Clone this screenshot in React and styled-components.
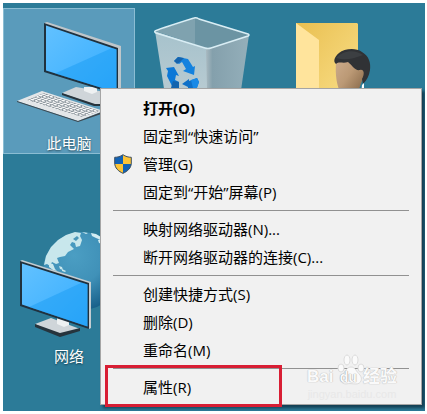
import React from 'react';
import styled, { createGlobalStyle } from 'styled-components';

const GlobalStyle = createGlobalStyle`
  * {
    box-sizing: border-box;
  }
  body {
    margin: 0;
    background-color: #fff;
    font-family: 'Open Sans', 'Noto Sans CJK SC', sans-serif;
  }
`;

const Desktop = styled.main`
  position: relative;
  margin: 3px 2px 3px 3px;
  padding-top: 5px;
  min-height: calc(100vh - 6px);
  background-color: #2c7b98;
  overflow: hidden;
`;

const IconGrid = styled.div`
  display: grid;
  grid-template-columns: repeat(3, 132px);
  column-gap: 2px;
  row-gap: 67px;
`;

const DesktopIcon = styled.button`
  display: flex;
  flex-direction: column;
  align-items: center;
  height: 146px;
  padding: 0;
  border: none;
  background-color: ${({ $selected }) => ($selected ? '#5a9bbb' : 'transparent')};
  box-shadow: ${({ $selected }) => ($selected ? 'inset 0 0 0 1px #8bbdd3' : 'none')};
  color: #fff;
  font-family: inherit;
  font-size: 15px;
  line-height: 22px;
  text-shadow: 0 1px 2px rgba(0, 0, 0, 0.5);
`;

const Art = styled.svg`
  flex: none;
  width: 132px;
  height: 124px;
  overflow: visible;
`;

const Menu = styled.div`
  position: absolute;
  top: 85px;
  left: 97px;
  right: 3px;
  padding: 5px 2px 3px;
  border: 1px solid #a5a5a5;
  background-color: #f1f1f1;
  box-shadow: 3px 3px 3px rgba(0, 20, 35, 0.6);
`;

const MenuItem = styled.button`
  display: grid;
  grid-template-columns: 40px 1fr;
  align-items: center;
  width: 100%;
  height: 28px;
  padding: 0;
  border: none;
  background: none;
  color: #000;
  font-family: inherit;
  font-size: 15px;
  font-weight: ${({ $bold }) => ($bold ? 700 : 400)};
  line-height: 28px;
  text-align: left;
`;

const ItemIcon = styled.span`
  display: flex;
  padding-left: 11px;
`;

const Separator = styled.hr`
  height: 1px;
  margin: 4px 10px;
  border: none;
  background-color: #919191;
`;

const Mark = styled.div`
  position: absolute;
  left: 4px;
  bottom: -3px;
  width: 177px;
  height: 42px;
  border: 3px solid #d81e34;
  pointer-events: none;
`;

const Watermark = styled.div`
  position: absolute;
  right: 24px;
  bottom: 3px;
  width: 90px;
  color: #fafafa;
  font-family: 'Liberation Sans', 'Noto Sans CJK SC', sans-serif;
  text-align: center;
  pointer-events: none;
`;

const WatermarkName = styled.div`
  display: flex;
  justify-content: space-between;
  align-items: center;
  font-size: 17px;
  font-weight: 700;
  line-height: 20px;
  text-shadow: 0 0 1px #bbb, 0 0 1px #bbb;
`;

const WatermarkSite = styled.div`
  color: #e8e8e8;
  font-size: 11px;
  line-height: 14px;
`;

const Paw = styled.svg`
  position: absolute;
  left: 30px;
  top: -13px;
`;

const Du = styled.span`
  position: relative;
  font-size: 14px;
  text-shadow: 0 0 1px #999, 0 0 1px #999;
`;

const ComputerArt = () => (
  <Art viewBox="3 8 132 124" aria-hidden="true">
    <defs>
      <linearGradient id="screen" x1="0" y1="0" x2="1" y2="1">
        <stop offset="0" stopColor="#62c1ff" />
        <stop offset="1" stopColor="#35adff" />
      </linearGradient>
      <pattern id="keys" width="4" height="3" patternUnits="userSpaceOnUse" patternTransform="matrix(1 .32 -.9 .45 0 0)">
        <rect width="4" height="3" fill="#8d979e" />
        <rect width="3" height="2" fill="#fafafa" />
      </pattern>
    </defs>
    <path d="M62 93 76 87 105 92v13l-10 0z" fill="#cfd5d9" />
    <path d="m62 93 33 11h10v2H94L62 95z" fill="#27333b" />
    <path d="M84 87h13v5l-5 2-8-3z" fill="#eef1f2" />
    <path d="m44 23 3-1 74 24v50l-3 1z" fill="#bfc6ca" />
    <path d="m44 23 74 25v47L44 72z" fill="#20313e" />
    <path d="m46 25.500 70.500 24v43L46 70.500z" fill="url(#screen)" />
    <path d="m112 48 4.500 1.500v43L55 73.500z" fill="#1398f2" opacity=".45" />
    <path d="m17 101 25-10 62 20-26 10z" fill="#e3e6e8" />
    <path d="m27 100 17-7 56 18-18 6z" fill="url(#keys)" />
    <path d="m17 101 61 20 26-10v2l-26 9-61-20z" fill="#3c464d" />
  </Art>
);

const BinArt = () => (
  <Art viewBox="137 8 132 124" aria-hidden="true">
    <defs>
      <linearGradient id="binLeft" x1="0" y1="0" x2="0" y2="1">
        <stop offset="0" stopColor="#a6c2cc" />
        <stop offset="1" stopColor="#c3d0d5" />
      </linearGradient>
      <linearGradient id="binRight" x1="0" y1="0" x2="1" y2="0">
        <stop offset="0" stopColor="#a9b9c0" />
        <stop offset="0.15" stopColor="#84a0ac" />
        <stop offset="1" stopColor="#94afba" />
      </linearGradient>
    </defs>
    <path d="m155 31 53 18v80l-40-15z" fill="url(#binLeft)" />
    <path d="m206 49 43-14-11 76-30 18z" fill="url(#binRight)" />
    <path d="m155 31 40-13 54 17-41 14z" fill="#7fa2af" />
    <path d="m195 18 54 17-41 14-13-4z" fill="#6b94a3" />
    <path d="M155 31Q156 30 194 18q2-1 5 1l49 15q2 1 0 2l-37 12q-3 1-6 0l-49-15q-2-1-1-2z" fill="none" stroke="#d9edf4" strokeWidth="1.500" />
    <path d="m174 61 4-4 10 2 5 8 2-1-1 9-11-4 3-2-4-7-3 2z" fill="#1482de" />
    <path d="m174 61 4-4 6 1-4 4-3 2z" fill="#1464ae" />
    <path d="m166 68 8-1 5 9-3-1-1 5 4 2v6h-6l-6-12 1-5z" fill="#0c78d7" />
    <path d="m173 81 6 1v6h-8z" fill="#1464ae" />
    <path d="m182 84 7-5v2l8-3 2 4-3 8h-8v-3z" fill="#0f70c8" />
    <path d="m191 80 6-2 2 4-2 6h-4z" fill="#1989e6" />
  </Art>
);

const UserFolderArt = () => (
  <Art viewBox="271 8 132 124" aria-hidden="true">
    <defs>
      <linearGradient id="folderBack" x1="0" y1="0" x2="1" y2="1">
        <stop offset="0" stopColor="#e9bf50" />
        <stop offset="1" stopColor="#fae08a" />
      </linearGradient>
      <linearGradient id="face" x1="0" y1="0" x2="1" y2="1">
        <stop offset="0" stopColor="#cfae8e" />
        <stop offset="0.45" stopColor="#bb9975" />
        <stop offset="1" stopColor="#795b3d" />
      </linearGradient>
    </defs>
    <path d="M296 23h61l1 1v80h-62z" fill="url(#folderBack)" />
    <path d="m296 23 23 17v70l-23-17z" fill="#ffe49c" />
    <path d="M336 63c-1 12 1 22 4 29 4 8 14 8 19-3l3-8c4-4 4-10 1-14L350 56z" fill="url(#face)" />
    <path d="M336 64c-3-2-2-7 3-11 5-4 16-6 23-1 7 4 9 11 8 18-1 6-3 10-7 14l-1-5c3-5 2-10-2-9-5 1-7-4-12-8-5 2-9-1-12 2z" fill="#303235" />
    <path d="M336 58c7-8 19-9 27-3-8 3-17 6-27 3z" fill="#44474b" opacity=".6" />
    <path d="m362 85 2-2v12h-3z" fill="#fff" />
  </Art>
);

const NetworkArt = () => (
  <Art viewBox="3 221 132 124" aria-hidden="true">
    <defs>
      <radialGradient id="globe" cx="0.4" cy="0.3" r="0.75">
        <stop offset="0" stopColor="#4b9ec3" />
        <stop offset="0.5" stopColor="#4091b8" />
        <stop offset="1" stopColor="#155c86" />
      </radialGradient>
    </defs>
    <circle cx="82" cy="271" r="39" fill="url(#globe)" />
    <path d="m44 265 2-9 5-9 7-7 8-5 9-3 6 1-1 3 2 4-2 6-4 1-1-4-3-1-2 3 4 4-6 3-3 4-5 1-3 1 2 5-3 1-4-2-2 4-3-2z" fill="#c8e7ec" />
    <path d="m49 263 4 1 2 5 2 2-4-1-4-3zM59 266l3 1 1 3-3-1zM62 269l4 2-1 1-3-1z" fill="#c8e7ec" />
    <path d="m73 239 4-3 2 2-3 3z" fill="#4a97b8" />
    <path d="m91 233 5 1 5 3v3l-5-2-4-2zM98 240l4-1v5l-3-1zM82 232l6 1-2 1z" fill="#d3edf2" />
    <path d="m35 324 16-6 29 11-20 7z" fill="#cfd5d9" />
    <path d="m35 324 25 9 20-5v3l-20 6-25-10z" fill="#26343d" />
    <path d="M57 318h12v7l-5 2-7-3z" fill="#eef1f2" />
    <path d="m20 261 2-1 69 22v46l-2 1z" fill="#c3ccd1" />
    <path d="m20 261 69 22v46l-69-23z" fill="#20313e" />
    <path d="m22 263.500 65.500 21v42L22 304.500z" fill="url(#screen)" />
    <path d="m82 282.500 5.500 2v42L29 307z" fill="#1398f2" opacity=".45" />
  </Art>
);

const ShieldIcon = () => (
  <svg width="18" height="20" viewBox="0 0 18 20" aria-hidden="true">
    <path d="M9 0.700C6.500 2.500 3.500 3.300 0.700 3.300V9c0 5 4 8.500 8.300 10.300z" fill="#1262b5" />
    <path d="M9 0.700c2.500 1.800 5.500 2.600 8.300 2.600V9c0 5-4 8.500-8.300 10.300z" fill="#fdc436" />
    <path d="M0.700 10H9v9.300C5 17.500 1 14.500 0.700 10z" fill="#fdc436" />
    <path d="M9 10h8.300c-.3 4.500-4.300 7.500-8.300 9.300z" fill="#1262b5" />
    <path d="M9 0.700C6.500 2.500 3.500 3.300 0.700 3.300V9c0 5 4 8.500 8.300 10.300C13.300 17.500 17.300 14 17.300 9V3.300C14.500 3.300 11.500 2.500 9 0.700z" fill="none" stroke="#3d4f60" />
  </svg>
);

const desktopIcons = [
  { id: 'computer', label: '此电脑', art: ComputerArt, selected: true },
  { id: 'bin', art: BinArt },
  { id: 'user', art: UserFolderArt },
  { id: 'network', label: '网络', art: NetworkArt },
];

const menuGroups = [
  [
    { text: '打开(O)', bold: true },
    { text: '固定到“快速访问”' },
    { text: '管理(G)', icon: <ShieldIcon /> },
    { text: '固定到“开始”屏幕(P)' },
  ],
  [{ text: '映射网络驱动器(N)...' }, { text: '断开网络驱动器的连接(C)...' }],
  [{ text: '创建快捷方式(S)' }, { text: '删除(D)' }, { text: '重命名(M)' }],
  [{ text: '属性(R)' }],
];

const App = () => {
  return (
    <>
      <GlobalStyle />
      <Desktop lang="zh-CN">
        <IconGrid>
          {desktopIcons.map(({ id, label, art: IconArt, selected }) => (
            <DesktopIcon key={id} type="button" $selected={selected}>
              <IconArt />
              {label}
            </DesktopIcon>
          ))}
        </IconGrid>
        <Menu role="menu">
          {menuGroups.map((group, index) => (
            <React.Fragment key={index}>
              {index > 0 && <Separator />}
              {group.map((item) => (
                <MenuItem key={item.text} type="button" role="menuitem" $bold={item.bold}>
                  <ItemIcon>{item.icon}</ItemIcon>
                  <span>{item.text}</span>
                </MenuItem>
              ))}
            </React.Fragment>
          ))}
          <Mark />
          <Watermark>
            <Paw width="28" height="34" viewBox="0 0 28 34" fill="#fafafa" stroke="#dcdcdc" aria-hidden="true">
              <ellipse cx="10" cy="6" rx="3" ry="5" />
              <ellipse cx="18" cy="6" rx="3" ry="5" />
              <ellipse cx="4" cy="14" rx="3" ry="4" />
              <ellipse cx="24" cy="14" rx="3" ry="4" />
              <path d="M14 13c4 0 5 4 9 8 3 4 1 9-4 9-4 0-6-1-10 0-5 0-7-5-4-9 4-4 5-8 9-8z" />
            </Paw>
            <WatermarkName>
              <span>Bai</span>
              <Du>du</Du>
              <span>经验</span>
            </WatermarkName>
            <WatermarkSite>jingyan.baidu.com</WatermarkSite>
          </Watermark>
        </Menu>
      </Desktop>
    </>
  );
};

export default App;
